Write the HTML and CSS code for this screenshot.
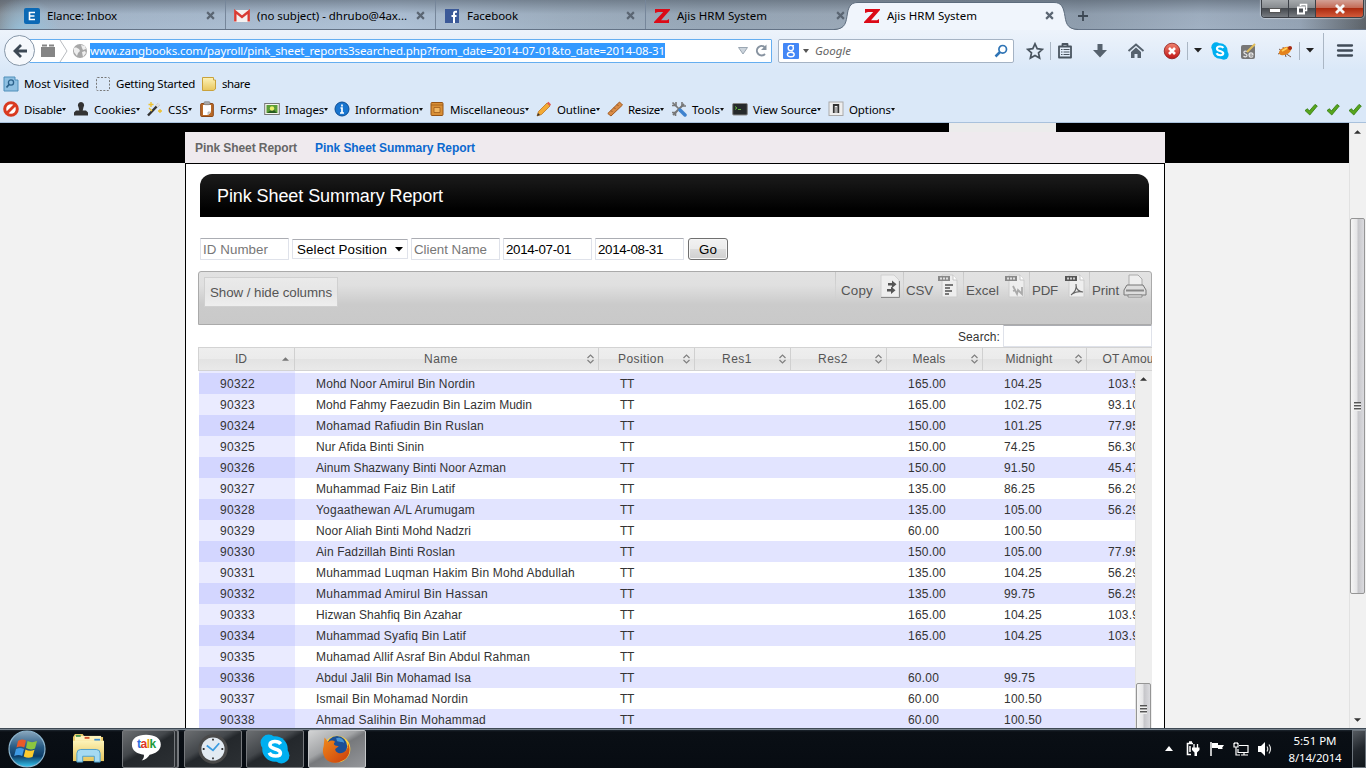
FILE: index.html
```html
<!DOCTYPE html>
<html lang="en">
<head>
<meta charset="utf-8">
<title>Ajis HRM System</title>
<link rel="stylesheet" href="styles.css">
</head>
<body>
<svg class="defs" width="0" height="0">
  <defs>
    <linearGradient id="gRed" x1="0" y1="0" x2="0" y2="1"><stop offset="0" stop-color="#f0836f"/><stop offset="1" stop-color="#c01515"/></linearGradient>
    <linearGradient id="gOrb" x1="0" y1="0" x2="0" y2="1"><stop offset="0" stop-color="#8aa7bd"/><stop offset=".45" stop-color="#265a84"/><stop offset=".7" stop-color="#0d3d68"/><stop offset="1" stop-color="#35c8f2"/></linearGradient>
    <linearGradient id="gFolder" x1="0" y1="0" x2="0" y2="1"><stop offset="0" stop-color="#fdf3b8"/><stop offset="1" stop-color="#e8c65c"/></linearGradient>
    <linearGradient id="gFox" x1="0" y1="0" x2="1" y2="1"><stop offset="0" stop-color="#f08a1c"/><stop offset="1" stop-color="#c93c0a"/></linearGradient>
    <symbol id="x" viewBox="0 0 8 8"><path d="M1 1l6 6M7 1l-6 6" stroke="#5b6673" stroke-width="1.900"/></symbol>
    <symbol id="z" viewBox="0 0 16 16"><path d="M1 1h15v1L7 12.300H13l2-1.300v4H0v-1L9.200 3.900H4L1 5z" fill="#dc0a17"/></symbol>
    <symbol id="check" viewBox="0 0 14 13"><path d="M1 7.500l2.500-1.800L5.300 8 11 1.400 13.300 3 5.800 12z" fill="#58a51c" stroke="#2f7a0b" stroke-width=".8"/></symbol>
    <symbol id="sort" viewBox="0 0 8 10"><path d="M1 4l3-3 3 3M1 6l3 3 3-3" fill="none" stroke="#808080" stroke-width="1.200"/></symbol>
    <symbol id="doc" viewBox="0 0 20 24"><path d="M4 1h11l4 5v17H4z" fill="#eee" stroke="#ccc"/><path d="M15 1v5h4" fill="#fff" stroke="#c4c4c4"/></symbol>
    <symbol id="skype" viewBox="0 0 16 16"><circle cx="4.600" cy="4.600" r="4.300" fill="#00aff0"/><circle cx="11.400" cy="11.400" r="4.300" fill="#00aff0"/><circle cx="8" cy="8" r="6.800" fill="#00aff0"/><path d="M11 5.300C9.800 3.500 5.300 3.500 5.300 5.900c0 2.600 5.600 1.500 5.600 4.200 0 2.200-4.800 2.300-6-.1" fill="none" stroke="#fff" stroke-width="1.900"/></symbol>
  </defs>
</svg>

<header class="chrome">
  <div class="tabs">
    <div class="tab"><svg class="fav" viewBox="0 0 16 16"><rect width="16" height="16" rx="2" fill="#0b69b5"/><path d="M11 4.500H5.500v7H11M5.500 8h5" fill="none" stroke="#fff" stroke-width="1.600"/></svg><span class="tt" data-w="70">Elance: Inbox</span><svg class="tx"><use href="#x"/></svg></div>
    <div class="tab"><svg class="fav" viewBox="0 0 16 16"><rect y="2" width="16" height="12" rx="1" fill="#f4f1f0"/><path d="M1.300 13.500V3.500L8 9l6.700-5.500v10" fill="none" stroke="#d93b33" stroke-width="2.400"/></svg><span class="tt" data-w="150">(no subject) - dhrubo@4ax...</span><svg class="tx"><use href="#x"/></svg></div>
    <div class="tab"><svg class="fav" viewBox="0 0 16 16"><rect x="1" y="1" width="14" height="14" fill="#3b5998"/><path d="M13 3.800h-1.500c-1 0-1.500.6-1.500 1.600V15M7.500 8h5" fill="none" stroke="#fff" stroke-width="2"/></svg><span class="tt" data-w="51">Facebook</span><svg class="tx"><use href="#x"/></svg></div>
    <div class="tab last"><svg class="fav"><use href="#z"/></svg><span class="tt" data-w="90">Ajis HRM System</span><svg class="tx"><use href="#x"/></svg></div>
    <div class="tab active">
      <svg class="shape" viewBox="0 0 244 30"><path d="M0 30C12 29 12 22 13.500 13 15 5 18 2.500 24 2.500H220c7 0 9 4 10.500 11C232 22 232 29 244 30z" fill="#f0f5fc"/><path d="M0 29.500C12 29 12 22 13.500 13 15 5 18 2.500 24 2.500H220c7 0 9 4 10.500 11C232 22 232 29 244 29.500" fill="none" stroke="#5d6c7d"/></svg>
      <svg class="fav"><use href="#z"/></svg><span class="tt" data-w="90">Ajis HRM System</span><svg class="tx"><use href="#x"/></svg>
    </div>
    <svg class="plus" viewBox="0 0 12 12"><path d="M6 1v10M1 6h10" stroke="#3d4854" stroke-width="1.800"/></svg>
    <div class="winbtns">
      <span class="wb min"><svg viewBox="0 0 12 6"><rect x=".5" y=".5" width="11" height="4" fill="#fff" stroke="#555"/></svg></span><span class="wb max"><svg viewBox="0 0 12 12"><path d="M4.500 3V1.500h6v6H9" fill="none" stroke="#fff" stroke-width="1.600"/><path d="M2 4.500h6v6H2z" fill="none" stroke="#fff" stroke-width="2"/></svg></span><span class="wb close"><svg viewBox="0 0 12 12"><path d="M2 2l8 8M10 2l-8 8" stroke="#f7f7f7" stroke-width="2.800"/></svg></span>
    </div>
  </div>

  <div class="nav">
    <div class="back"><svg viewBox="0 0 16 16"><path d="M15 8H3M9 2L3 8l6 6" fill="none" stroke="#3c4854" stroke-width="2.800"/></svg></div>
    <div class="url">
      <svg class="brick" viewBox="0 0 16 14"><path d="M1 3h14v10H1z" fill="#858585"/><path d="M2 1.500h5M9 1.500h5" stroke="#858585" stroke-width="2"/></svg>
      <svg class="chev" viewBox="0 0 10 22"><path d="M1 0l7 11-7 11" fill="none" stroke="#b9bcc0"/></svg>
      <svg class="globe" viewBox="0 0 16 16"><circle cx="8" cy="8" r="7" fill="#a7a7a7"/><path d="M2 5c2-1 3 0 5 1l1 2-2 2-1 3-3-4zM9 2l4 1 1 3-3 1-1-2zM10 9l3-1 1 2-3 4z" fill="#eee"/></svg>
      <span class="sel" data-w="575">www.zangbooks.com/payroll/pink_sheet_reports3searched.php?from_date=2014-07-01&amp;to_date=2014-08-31</span>
      <svg class="drop" viewBox="0 0 10 8"><path d="M.5.500h9L5 7z" fill="#ccd4dc" stroke="#9aa6b2"/></svg>
      <svg class="reload" viewBox="0 0 14 14"><path d="M10.500 3A4.700 4.700 0 1 0 11 10" fill="none" stroke="#8793a0" stroke-width="2"/><path d="M7 6h5.500V.5z" fill="#8793a0"/></svg>
    </div>
    <div class="gsearch">
      <svg class="g8" viewBox="0 0 16 16"><rect width="16" height="16" rx="1" fill="#4387f6"/><circle cx="7.800" cy="5" r="2.600" fill="none" stroke="#fff" stroke-width="1.400"/><ellipse cx="7.800" cy="11.500" rx="3.400" ry="2.300" fill="none" stroke="#fff" stroke-width="1.400"/><path d="M8 2.500h3M8 7.500l2 2" stroke="#fff"/></svg>
      <svg class="gd" viewBox="0 0 6 4"><path d="M0 0h6L3 4z" fill="#555"/></svg>
      <em data-w="36">Google</em>
      <svg class="mag" viewBox="0 0 14 14"><circle cx="8.700" cy="5.300" r="3.800" fill="none" stroke="#2f74b5" stroke-width="1.700"/><path d="M6 8L1.500 12.500" stroke="#2f74b5" stroke-width="2.500"/></svg>
    </div>
    <div class="acts">
      <svg viewBox="0 0 18 18"><path d="M9 1.800l2.200 4.900 5.200.6-3.900 3.500 1.100 5.200L9 13.400 4.400 16l1.100-5.200L1.600 7.300l5.200-.6z" fill="none" stroke="#49545f" stroke-width="1.700"/></svg>
      <i class="sep"></i>
      <svg viewBox="0 0 18 18"><path d="M6.500 4V2h5v2M3 4.500h12v11H3z" fill="none" stroke="#49545f" stroke-width="1.800" stroke-linejoin="round"/><path d="M5 7.500h1.500m1 0h6M5 10h1.500m1 0h6M5 12.500h1.500m1 0h6" stroke="#49545f" stroke-width="1.200"/></svg>
      <svg viewBox="0 0 18 18"><path d="M6.500 2h5v6H16l-7 7.500L2 8h4.500z" fill="#56626e"/></svg>
      <svg viewBox="0 0 18 18"><path d="M1.500 9L9 2.500 16.500 9" fill="none" stroke="#56626e" stroke-width="1.900"/><path d="M4 10l5-4.500L14 10v6h-3.500v-4h-3v4H4z" fill="#56626e"/></svg>
      <svg viewBox="0 0 18 18"><circle cx="9" cy="9" r="7.800" fill="url(#gRed)" stroke="#8b1a18" stroke-width=".8"/><path d="M6 6l6 6M12 6l-6 6" stroke="#fff" stroke-width="2.600"/></svg>
      <i class="sep"></i>
      <svg class="sm" viewBox="0 0 8 5"><path d="M0 0h8L4 4.500z" fill="#222"/></svg>
      <svg viewBox="0 0 16 16"><use href="#skype"/></svg>
      <svg viewBox="0 0 18 18"><rect x="2" y="3" width="14" height="14" rx="2" fill="#777"/><path d="M8 9.500C6 8.500 4.500 9.300 5 10.800s3 1 3 2.700-2.500 1.600-3.500.5M10 13h4c0-2.800-4-2.800-4 0s3 2.500 4 1.300" fill="none" stroke="#e5e5e5" stroke-width="1.200"/><path d="M8 10l8-8" stroke="#e0bd5a" stroke-width="2"/></svg>
      <svg viewBox="0 0 18 18"><path d="M3 7l12 8M7 5l3 10M2 12l14-6" stroke="#553322" stroke-width=".8"/><ellipse cx="9" cy="9" rx="6.500" ry="3.700" transform="rotate(-25 9 9)" fill="#e4831c"/><circle cx="14" cy="6" r="2" fill="#a82c14"/><path d="M6 9l5-3" stroke="#ffd05a" stroke-width="2"/></svg>
      <i class="sep"></i>
      <svg class="sm" viewBox="0 0 8 5"><path d="M0 0h8L4 4.500z" fill="#222"/></svg>
      <i class="sep tall"></i>
      <svg viewBox="0 0 18 18"><path d="M2 3.500h14M2 8.500h14M2 13.500h14" stroke="#414c58" stroke-width="2.300" stroke-linecap="round"/></svg>
    </div>
  </div>

  <div class="bookmarks">
    <svg viewBox="0 0 16 16"><path d="M1 1h11v3h3v11H1z" fill="#8fc0e2" stroke="#4e8fba"/><circle cx="8" cy="6.500" r="2.600" fill="none" stroke="#2c628c" stroke-width="1.300"/><path d="M6 8.500L3.500 11.500" stroke="#2c628c" stroke-width="1.800"/></svg><span data-w="65">Most Visited</span>
    <svg viewBox="0 0 16 16"><rect x="1.500" y="1.500" width="13" height="13" rx="1" fill="none" stroke="#777" stroke-dasharray="2 1.500"/></svg><span data-w="79">Getting Started</span>
    <svg viewBox="0 0 16 16"><path d="M1.500 1.500h11V4h2v9l-2 1.500h-11z" fill="url(#gFolder)" stroke="#c9a23c"/></svg><span data-w="28">share</span>
  </div>

  <div class="dev">
    <div><svg viewBox="0 0 16 16"><circle cx="8" cy="8" r="6.300" fill="#fff" stroke="#d93a20" stroke-width="3"/><path d="M4 12l8-8" stroke="#d93a20" stroke-width="2.800"/></svg><span data-w="38">Disable</span></div>
    <div><svg viewBox="0 0 16 16"><path d="M8 1a3.300 3.300 0 0 1 2.500 5.200L9.700 9.500H13l2 2v3H1v-3l2-2h3.300L5.500 6.200A3.300 3.300 0 0 1 8 1z" fill="#333"/></svg><span data-w="42">Cookies</span></div>
    <div><svg viewBox="0 0 16 16"><path d="M1 14.500L12 3" stroke="#333" stroke-width="2.500"/><path d="M9.500 5.500l3-3" stroke="#ddd" stroke-width="2.500"/><path d="M4 1v5M1.500 3.500h5M13 8v4M11 10h4M2 7l3 3" stroke="#eec02a" stroke-width="1.300"/></svg><span data-w="20">CSS</span></div>
    <div><svg viewBox="0 0 16 16"><rect x="1.700" y="2.500" width="12.600" height="13" rx="1" fill="#b96927" stroke="#8a4717"/><path d="M4 4h8v7l-3 3H4z" fill="#fff"/><path d="M9 14v-3h3" fill="#ddd" stroke="#999" stroke-width=".6"/><rect x="5" y=".7" width="6" height="3" rx="1" fill="#aaa" stroke="#777" stroke-width=".6"/></svg><span data-w="33">Forms</span></div>
    <div><svg viewBox="0 0 16 16"><rect x=".7" y="2.500" width="14.600" height="11" fill="#f4f4ee" stroke="#777"/><rect x="2.500" y="4" width="11" height="8" fill="#5b9d37"/><path d="M3 12l4-3h3l3 3z" fill="#275c21"/><circle cx="8" cy="7.500" r="2.200" fill="#ecf06b"/></svg><span data-w="39">Images</span></div>
    <div><svg viewBox="0 0 16 16"><circle cx="8" cy="8" r="7" fill="#1875cf" stroke="#0c4c94"/><path d="M8 3.500v2M6.500 7H8v5M6 12h4" fill="none" stroke="#fff" stroke-width="1.700"/></svg><span data-w="64">Information</span></div>
    <div><svg viewBox="0 0 16 16"><rect x="2" y="1.500" width="12" height="13" rx="1" fill="#d98f36" stroke="#965416"/><path d="M2 4h12M5 6.500h6v5H5z" fill="#f0b560" stroke="#a05d1b" stroke-width=".8"/></svg><span data-w="75">Miscellaneous</span></div>
    <div><svg viewBox="0 0 16 16"><path d="M1 15l1.500-4.500L11 2l3 3-8.500 8.500z" fill="#f3aa35" stroke="#b66b16" stroke-width=".7"/><path d="M11 2l1.500-1.200L15 3.500 14 5z" fill="#e35b52"/><path d="M1 15l1-3 2 2z" fill="#333"/></svg><span data-w="39">Outline</span></div>
    <div><svg viewBox="0 0 16 16"><path d="M.8 12.500L12.500 1l3 3L4 15z" fill="#d98b45" stroke="#a0591f"/><path d="M4 9.500l1.500 1.500M7 6.500L8.500 8M10 3.500L11.500 5" stroke="#8a4a18" stroke-width=".8"/></svg><span data-w="32">Resize</span></div>
    <div><svg viewBox="0 0 16 16"><path d="M2 14L13 3" stroke="#777" stroke-width="2"/><path d="M1.500 1.500L9 9" stroke="#777" stroke-width="1.700"/><path d="M9 9l5 5" stroke="#3e82ce" stroke-width="3.500" stroke-linecap="round"/><path d="M11 1v4h4M1 11.500h3.500V15M5 1v3.500H1" fill="none" stroke="#777" stroke-width="1.600"/></svg><span data-w="28">Tools</span></div>
    <div><svg viewBox="0 0 16 16"><rect x=".7" y="2.500" width="14.600" height="11.500" rx="1" fill="#25292b" stroke="#888"/><path d="M3 5.500l2 1.500-2 1.500M6 8.500h3" fill="none" stroke="#5fb63c"/></svg><span data-w="64">View Source</span></div>
    <div><svg viewBox="0 0 16 16"><rect x="1" y="1" width="14" height="13.500" fill="#eee" stroke="#aaa"/><path d="M5.800 12V4h4.500v8" fill="none" stroke="#333" stroke-width="1.800"/><path d="M8 6v6" stroke="#aaa" stroke-width="2"/></svg><span data-w="42">Options</span></div>
    <div class="checks"><svg><use href="#check"/></svg><svg><use href="#check"/></svg><svg><use href="#check"/></svg></div>
  </div>
</header>

<div class="view">
  <div class="page">
    <div class="topband"><i></i></div>
    <main class="wrap">
      <nav class="sub"><a class="g" data-w="102">Pink Sheet Report</a><a class="b" data-w="160">Pink Sheet Summary Report</a></nav>
      <section class="sheet">
        <h1><span data-w="226">Pink Sheet Summary Report</span></h1>
        <div class="form">
          <div class="in ph"><span data-w="65">ID Number</span></div>
          <div class="in select"><span data-w="90">Select Position</span><svg viewBox="0 0 8 5"><path d="M0 0h8L4 4.500z"/></svg></div>
          <div class="in ph"><span data-w="73">Client Name</span></div>
          <div class="in"><span data-w="65">2014-07-01</span></div>
          <div class="in"><span data-w="65">2014-08-31</span></div>
          <div class="go"><span data-w="18">Go</span></div>
        </div>
        <div class="tools">
          <div class="shc"><span data-w="122">Show / hide columns</span></div>
          <div class="exports">
            <div class="ex e1"><span data-w="32">Copy</span><svg viewBox="0 0 20 24"><path d="M1 1h13l5 5v17H1z" fill="#eee" stroke="#d0d0d0"/><path d="M1 23.500h18.500V7" fill="none" stroke="#888"/><path d="M8 9h4V6.500l4.500 3.700-4.500 3.700V11.500H8zM7 15h4v-2.500l4.500 3.700-4.500 3.700V17.500H7z" fill="#555"/></svg></div>
            <div class="ex e2"><span data-w="27">CSV</span><svg viewBox="0 0 20 24"><use href="#doc"/><rect y="2" width="12" height="5" fill="#888"/><path d="M2 4.500h2m1 0h2m1 0h2" stroke="#ddd" stroke-width="2"/><path d="M7 11h8M7 14h5M7 17h7M7 20h4" stroke="#777" stroke-width="1.800"/></svg></div>
            <div class="ex e3"><span data-w="33">Excel</span><svg viewBox="0 0 20 24"><use href="#doc"/><rect y="2" width="12" height="5" fill="#888"/><path d="M2 4.500h2m1 0h2m1 0h2" stroke="#ddd" stroke-width="2"/><path d="M8 12l4 8 1-4 4 4v-7M8 17l3-1" fill="none" stroke="#aaa" stroke-width="1.800"/></svg></div>
            <div class="ex e4"><span data-w="26">PDF</span><svg viewBox="0 0 20 24"><use href="#doc"/><rect y="2" width="12" height="5" fill="#555"/><path d="M2 4.500h2m1 0h2m1 0h2" stroke="#ccc" stroke-width="2"/><path d="M11 10c1 5-2 9-5 11M11 11c0 4 3 7 7 7-4-1-8 0-11 2" fill="none" stroke="#666" stroke-width="1.200"/></svg></div>
            <div class="ex e5"><span data-w="27">Print</span><svg viewBox="0 0 24 24"><path d="M6 12V1h9l4 4v7" fill="#eee" stroke="#aaa"/><path d="M4 11h16l3 5v5H1v-5z" fill="#ddd" stroke="#777"/><path d="M3 15.500h18v2H3z" fill="#888"/><path d="M5 21h14v2H5z" fill="#fff" stroke="#888"/></svg></div>
          </div>
        </div>
        <div class="search"><span data-w="42">Search:</span><div class="in"></div></div>
        <div class="thead" id="thead"></div>
        <div class="tbody">
          <div class="rows" id="rows"></div>
          <div class="isb"><svg viewBox="0 0 8 4"><path d="M0 4h8L4 0z"/></svg><div class="thumb"><i></i></div></div>
        </div>
      </section>
    </main>
  </div>
  <div class="vsb"><svg viewBox="0 0 8 4"><path d="M0 4h8L4 0z"/></svg><div class="thumb"><i></i></div><svg class="dn" viewBox="0 0 8 4"><path d="M0 0h8L4 4z"/></svg></div>
</div>

<footer class="taskbar">
  <svg class="orb" viewBox="0 0 38 38"><circle cx="19" cy="19" r="18" fill="url(#gOrb)" stroke="#8db6cf" stroke-width="1.200"/><path d="M10 11c3-2 5-2 8-.5l-1.700 7C13.500 16 11 16 8.500 17.500z" fill="#ea5a28"/><path d="M19.500 11c3 1.500 6 1.500 9.500 0l-2 7.500c-3 1.300-6 1.200-9-.5z" fill="#8cc63f"/><path d="M8 19c3-1.500 5-1.300 8 0l-1.800 7c-2.500-1.500-5-1.500-8 0z" fill="#3f9be5"/><path d="M17.500 19.500c3 1.500 6 1.500 9 .3l-2 7.200c-3 1.200-6 1-8.800-.6z" fill="#fccb2d"/></svg>
  <svg class="folder" viewBox="0 0 34 32"><path d="M1 4l2-3h8l2 3h19v25H1z" fill="#eacb6b"/><path d="M3 3h27v5H3z" fill="#fff4bc"/><path d="M4 3h5" stroke="#4f9a54" stroke-width="2"/><path d="M13 5h5" stroke="#d0552f" stroke-width="2"/><path d="M23 7h6" stroke="#3f8fd0" stroke-width="2"/><path d="M1 8h32v21H1z" fill="url(#gFolder)"/><path d="M5 30V21q0-4 4-4h16q4 0 4 4v9h-6v-6H11v6z" fill="#a5daf2" stroke="#4d9fc9"/></svg>
  <div class="tb stack"><svg viewBox="0 0 36 36"><path d="M17 2c10 0 16.500 4 16.500 11S27 23.500 21 24.500c-2 3.500-5 5.500-9 6.500 2-2 3-4 2.500-6.500C6.500 23.500 1 20 1 13S7 2 17 2z" fill="#fff"/></svg><b class="talk"><i>t</i><i>a</i><i>l</i><i>k</i></b></div>
  <div class="tb"><svg viewBox="0 0 36 36"><circle cx="18" cy="18" r="16.500" fill="#4a4a4a"/><circle cx="18" cy="18" r="13" fill="#e2eaf2"/><path d="M18 6.500v2M18 27.500v2M6.500 18h2M27.500 18h2" stroke="#333" stroke-width="2"/><path d="M11 14l7 5.500 7-8" fill="none" stroke="#3a9be0" stroke-width="2"/></svg></div>
  <div class="tb"><svg class="sk"><use href="#skype"/></svg></div>
  <div class="tb on"><svg viewBox="0 0 36 36"><circle cx="18" cy="18" r="15" fill="#ffd23c"/><circle cx="18" cy="15" r="11.500" fill="#1c4f96"/><path d="M17 6c4-2 9 1 9 5-3-2-5 0-8-2z" fill="#4694d3"/><path d="M4 5l4 5c3-2 6-2 8 0-2 1-2 3 0 4l4 1-4 3c0 4 5 6 9 4 4-2 6-6 5-11 4 6 3 18-8 21C9 38-1 26 3 15z" fill="url(#gFox)"/></svg></div>
  <div class="tray">
    <svg class="up" viewBox="0 0 8 5"><path d="M0 5h8L4 0z" fill="#fff"/></svg>
    <svg viewBox="0 0 16 16"><path d="M6 13.500H2.500v-11H8M4 1h3" fill="none" stroke="#fff" stroke-width="1.600"/><path d="M5 5v6" stroke="#fff" stroke-width="1.500"/><path d="M9 3v4M12.500 3v4" stroke="#fff" stroke-width="1.300"/><path d="M7 6.500h7.500V9L12 11.500V15H9.500v-3.500L7 9z" fill="#fff"/></svg>
    <svg viewBox="0 0 16 16"><path d="M2 1v14" stroke="#fff" stroke-width="1.500"/><path d="M3 2h6v2h6l-2 3 1 1H9V7H3z" fill="#fff"/></svg>
    <svg viewBox="0 0 16 16"><path d="M6 4.500h9v7H5V8M8 14h7M11 12v2M1 2v4h4V2M3 6v8h4M2 1v2M4 1v2" fill="none" stroke="#fff" stroke-width="1.200"/></svg>
    <svg viewBox="0 0 16 16"><path d="M1 5h3l4-4v14l-4-4H1z" fill="#fff"/><path d="M10 5.500q1.500 2.500 0 5M12 3.500q3 4.500 0 9" fill="none" stroke="#ddd" stroke-width="1.200"/></svg>
  </div>
  <div class="clock"><span data-w="43">5:51 PM</span><span data-w="53">8/14/2014</span></div>
  <div class="desk"></div>
</footer>
<script src="app.js"></script>
</body>
</html>
```

FILE: styles.css
```css
* { box-sizing: border-box; }
html, body { margin: 0; height: 100%; overflow: hidden; }
body { width: 1366px; height: 768px; display: flex; flex-direction: column; font: 12px "Liberation Sans", Arial, sans-serif; color: #333; }
svg { display: block; flex: none; }
.defs { position: absolute; }
[data-w] { display: inline-block; white-space: nowrap; flex: none; }

/* browser chrome */
.chrome { height: 123px; flex: none; display: flex; flex-direction: column; font-family: "Noto Sans", "Open Sans", sans-serif; font-size: 11.500px; color: #000; background: linear-gradient(#edf3fb 30px, #dae8f8 70px, #dae8f8); border-bottom: 1px solid #a9c1dc; }
.tabs { height: 30px; flex: none; display: flex; position: relative; padding-left: 16px; background: radial-gradient(ellipse 36px 34px at 24px 32px, #97c2dc, transparent), linear-gradient(rgba(70,80,92,.5), rgba(120,130,145,.1) 14px, transparent), linear-gradient(90deg, #83878d, #a5b7ca 40px, #afc2d7 400px, #a0b1c2 560px, #98a8b8 700px, #9ba9b8 860px, #8f9eae 1080px, #a1b1c3 1200px, #95a4b5 1300px, #5c6268); border-bottom: 1px solid #647386; }
.tab { width: 210px; height: 29px; padding: 2px 10px 0 8px; display: flex; align-items: center; gap: 7px; border-right: 1px solid #76869a; }
.tab.last { border-right: 0; width: 200px; padding-right: 1px; }
.tt { white-space: pre; }
.fav { width: 16px; height: 16px; position: relative; }
.tx { width: 9px; height: 9px; margin-left: auto; position: relative; }
.tab.active { width: 244px; height: 30px; padding: 1px 24px 0 30px; margin-left: -12px; border: 0; position: relative; margin-right: -8px; }
.tab.active .tt { position: relative; }
.shape { position: absolute; left: 0; top: 0; width: 244px; height: 30px; }
.plus { width: 12px; height: 12px; margin: 10px 0 0 7px; }
.winbtns { position: absolute; right: 2px; top: 0; display: flex; height: 18px; border: 1px solid #3c4046; border-top: 0; border-radius: 0 0 4px 4px; overflow: hidden; box-shadow: 0 0 1px 1px rgba(255,255,255,.4); }
.wb { display: flex; align-items: center; justify-content: center; width: 27px; background: linear-gradient(#a6aaad, #85898d 48%, #45494e 50%, #777b80); border-right: 1px solid #3c4046; }
.wb svg { width: 12px; }
.wb.min svg { margin-top: 4px; }
.wb.close { width: 47px; border: 0; background: linear-gradient(#d3a095, #c46c58 45%, #ac2b10 50%, #d35a3a); }
.nav { height: 41px; display: flex; flex: none; align-items: center; }
.back { width: 31px; height: 31px; margin-left: 4px; border-radius: 50%; border: 1px solid #8797a8; background: #f5f8fc; display: flex; align-items: center; justify-content: center; position: relative; z-index: 1; }
.back svg { width: 16px; }
.url { width: 743px; height: 24px; margin-left: -6px; display: flex; align-items: center; background: #fff; border: 1px solid #65aef0; border-radius: 1px; padding-left: 10px; }
.brick { width: 16px; height: 14px; }
.chev { width: 10px; height: 22px; margin-left: 3px; }
.globe { width: 16px; height: 16px; margin: 0 2px 0 3px; }
.sel { background: #3399ff; color: #fff; line-height: 15px; height: 15px; }
.drop { width: 10px; height: 8px; margin-left: 73px; }
.reload { width: 14px; height: 14px; margin-left: 6px; }
.gsearch { width: 236px; height: 24px; margin-left: 6px; display: flex; align-items: center; background: #fff; border: 1px solid #a5b3c4; border-radius: 2px; padding: 0 5px 0 4px; }
.g8 { width: 16px; height: 16px; }
.gd { width: 6px; height: 4px; margin: 0 6px 0 4px; }
.gsearch em { color: #666; }
.mag { width: 14px; height: 14px; margin-left: auto; }
.acts { display: grid; flex: 1; align-items: center; height: 36px; padding-left: 12px; grid-template-columns: 24px 6px 35px 36px 36px 24px 7px 17px 28px 37px 23px 7px 17px 13px 1fr; grid-auto-flow: column; }
.acts svg { width: 18px; height: 18px; }
.acts svg.sm { width: 8px; height: 5px; }
.sep { width: 1px; height: 18px; background: #aab6c4; }
.sep.tall { height: 36px; }
.bookmarks { height: 26px; display: flex; align-items: center; padding-left: 3px; }
.bookmarks svg { width: 16px; height: 16px; margin-right: 5px; }
.bookmarks span { margin-right: 6px; }
.dev { height: 26px; display: grid; grid-template-columns: 70px 74px 52px 65px 70px 95px 107px 71px 64px 61px 96px 70px 1fr; padding-left: 3px; }
.dev div { display: flex; align-items: center; }
.dev svg { width: 16px; height: 16px; margin-right: 5px; }
.dev span { position: relative; }
.dev span::after { content: ""; position: absolute; left: 100%; top: 6px; border: 2.500px solid transparent; border-top: 3px solid #111; border-bottom: 0; }
.dev .checks { justify-content: flex-end; }
.dev .checks svg { width: 14px; height: 13px; margin: 0 4px; }

/* page */
.view { height: 605px; flex: none; display: flex; }
.page { width: 1349px; height: 605px; overflow: hidden; background: linear-gradient(#000 40px, #f2f2f2 40px); }
.topband { height: 9px; }
.topband i { display: block; margin-left: 949px; width: 107px; height: 9px; background: #ececec; }
.wrap { width: 980px; margin-left: 185px; }
.sub { height: 31px; background: #efeaee; padding: 0 10px; display: flex; align-items: center; gap: 18px; font-weight: bold; }
.sub .g { color: #666; }
.sub .b { color: #0b69cf; }
.sheet { height: 566px; background: #fff; border: 1px solid #000; padding: 10px 12px 0; }
h1 { margin: 0 3px 0 2px; height: 43px; border-radius: 12px 12px 0 0; background: linear-gradient(#1c1c1c, #000 85%); color: #fff; font-weight: normal; font-size: 18px; padding: 2px 0 0 17px; display: flex; align-items: center; }
.form { display: flex; align-items: center; margin: 21px 0 0 2px; height: 22px; font-size: 13.333px; color: #000; gap: 3px; }
.in { width: 89px; height: 22px; background: #fff; border: 1px solid #dfe2ea; border-top-color: #abadb3; border-radius: 1px; padding-left: 2px; display: flex; align-items: center; }
.ph { color: #777; }
.select { width: 116px; height: 20px; padding: 0 4px; justify-content: space-between; }
.select svg { width: 8px; height: 5px; }
.go { width: 40px; height: 22px; margin-left: 1px; border: 1px solid #707070; border-radius: 3px; background: linear-gradient(#f2f2f2, #ebebeb 50%, #ddd 50%, #cfcfcf); box-shadow: inset 0 0 0 1px #f6f6f6; display: flex; align-items: center; justify-content: center; }
.tools { margin-top: 11px; height: 54px; border: 1px solid #aaa; border-radius: 3px 3px 0 0; background: linear-gradient(#e2e2e2, #e0e0e0 25%, #cbcbcb 62%, #c9c9c9); display: flex; justify-content: space-between; font-size: 13.333px; color: #555; }
.shc { height: 30px; width: 134px; margin: 5px; border: 1px solid #d0d0d0; background: linear-gradient(#eaeaea, #e6e6e6 50%, #eee); display: flex; align-items: center; justify-content: center; padding-top: 1px; }
.exports { display: flex; height: 28px; }
.ex { border-left: 1px solid; border-image: linear-gradient(#c6c6c6, transparent) 1; padding: 7px 0 0 5px; display: flex; align-items: center; gap: 7px; height: 29px; }
.ex svg { width: 20px; height: 24px; margin-top: -9px; }
.e1 { width: 68px; } .e2 { width: 60px; padding-left: 2px; gap: 5px; } .e3 { width: 66px; padding-left: 2px; gap: 6px; } .e4 { width: 60px; padding-left: 2px; } .e5 { width: 62px; padding-left: 2px; gap: 4px; }
.ex.e5 svg { width: 24px; }
.search { height: 22px; display: flex; align-items: center; justify-content: flex-end; gap: 3px; }
.search span { padding-top: 1px; }
.search .in { width: 149px; height: 22px; }
.thead { height: 24px; display: flex; overflow: hidden; border: 1px solid #d3d3d3; border-right: 0; background: linear-gradient(#eee, #ebebeb 50%, #e3e3e3 52%, #e9e9e9); color: #555; }
.th { flex: none; display: flex; align-items: center; border-right: 1px solid #d0d0d0; padding-right: 3px; }
.th .lab { flex: 1; display: flex; justify-content: center; padding-left: 1px; }
.th svg { width: 9px; height: 10px; }
.th svg.asc { width: 7px; height: 4px; margin-right: 2px; fill: #777; }
.tbody { display: flex; height: 357px; overflow: hidden; padding-left: 1px; }
.rows { width: 936px; overflow: hidden; background: linear-gradient(90deg, #eaebff 96px, transparent 96px); padding-top: 2px; flex: none; }
.row { display: grid; height: 21px; width: 1000px; align-items: center; grid-template-columns: 96px 304px 96px 96px 96px 96px 104px 112px; }
.row > div { height: 21px; line-height: 21px; padding: 1px 0 0 21px; }
.row:nth-child(odd) { background: #e2e4ff; }
.row > div:first-child { background: #eaebff; }
.row:nth-child(odd) > div:first-child { background: #d3d6ff; }
.isb { width: 17px; background: #eee; border-left: 1px solid #e4e4e4; display: flex; flex-direction: column; align-items: flex-start; padding-top: 6px; }
.isb > svg { margin-left: 4px; }
.isb > svg, .vsb > svg { width: 7px; height: 4px; fill: #333; }
.isb .thumb { margin-top: 302px; width: 15px; height: 80px; flex: none; padding-top: 21px; }
.thumb { border: 1px solid #959595; border-radius: 2px; background: linear-gradient(90deg, #f5f5f5, #e5e5e7 45%, #c6c6ca 55%, #dadade); display: flex; justify-content: center; }
.thumb i { width: 7px; height: 9px; background: repeating-linear-gradient(#555 0 1px, #aaa 1px 2px, #f0f0f0 2px 3px); }
.vsb { width: 17px; background: #f1f1f1; border-left: 1px solid #e2e2e2; display: flex; flex-direction: column; align-items: center; padding: 7px 1px 6px 0; }
.vsb .thumb { margin-top: 84px; width: 15px; height: 376px; align-items: center; }
.vsb .dn { margin-top: auto; }

/* taskbar */
.taskbar { height: 40px; flex: none; display: flex; align-items: center; border-top: 1px solid #3f4a55; background: linear-gradient(#26303a, #0a0f15 3px, #070c12); box-shadow: inset 0 1px #77828c; color: #fff; font-family: "Noto Sans", "Open Sans", sans-serif; font-size: 11.500px; }
.orb { width: 38px; height: 38px; margin-left: 8px; }
.folder { width: 33px; height: 31px; margin: 0 17px 0 26px; }
.tb { width: 58px; height: 38px; margin-right: 4px; border: 1px solid #76797d; border-radius: 2px; background: linear-gradient(150deg, #6b6e71, #43474b 40%, #24282c 50%, #2c3034); display: flex; align-items: center; justify-content: center; position: relative; }
.tb svg { width: 32px; height: 32px; }
.tb svg.sk { width: 30px; height: 30px; }
.stack { width: 53px; margin-right: 9px; padding-right: 3px; box-shadow: 3px 0 0 -1px #2b2f33, 4px 0 0 0 #75787c; }
.on { background: linear-gradient(150deg, #d2d3d4, #a2a4a6 40%, #77797c 50%, #94969a); border-color: #c4c6c8; }
.talk { position: absolute; left: 14px; top: 6px; font: bold 12px "Liberation Sans", Arial, sans-serif; letter-spacing: -.5px; }
.talk i { font-style: normal; color: #2a6de0; }
.talk i:nth-child(2) { color: #df3525; }
.talk i:nth-child(3) { color: #e8a40a; }
.talk i:nth-child(4) { color: #1b9a3a; }
.tray { margin-left: auto; display: flex; align-items: center; gap: 8px; }
.tray svg { width: 16px; height: 16px; }
.tray svg.up { width: 8px; height: 5px; margin-right: 4px; }
.clock { width: 70px; margin: 0 2px 0 7px; display: flex; flex-direction: column; align-items: center; line-height: 17px; }
.desk { width: 14px; height: 38px; border: 1px solid #6c747c; background: linear-gradient(150deg, #555a60, #22272d 50%, #11161b); }
```

FILE: app.js
```js
const columns = [['ID', 96, 12], ['Name', 304, 34], ['Position', 96, 46], ['Res1', 96, 30], ['Res2', 96, 30], ['Meals', 96, 33], ['Midnight', 104, 47], ['OT Amount', 104, 61]];
const records = [
  ['90322', 'Mohd Noor Amirul Bin Nordin', 159, '165.00', '104.25', '103.95'],
  ['90323', 'Mohd Fahmy Faezudin Bin Lazim Mudin', 216, '165.00', '102.75', '93.10'],
  ['90324', 'Mohamad Rafiudin Bin Ruslan', 168, '150.00', '101.25', '77.95'],
  ['90325', 'Nur Afida Binti Sinin', 108, '150.00', '74.25', '56.30'],
  ['90326', 'Ainum Shazwany Binti Noor Azman', 190, '150.00', '91.50', '45.47'],
  ['90327', 'Muhammad Faiz Bin Latif', 139, '135.00', '86.25', '56.29'],
  ['90328', 'Yogaathewan A/L Arumugam', 159, '135.00', '105.00', '56.29'],
  ['90329', 'Noor Aliah Binti Mohd Nadzri', 155, '60.00', '100.50', ''],
  ['90330', 'Ain Fadzillah Binti Roslan', 139, '150.00', '105.00', '77.95'],
  ['90331', 'Muhammad Luqman Hakim Bin Mohd Abdullah', 259, '135.00', '104.25', '56.29'],
  ['90332', 'Muhammad Amirul Bin Hassan', 172, '135.00', '99.75', '56.29'],
  ['90333', 'Hizwan Shahfiq Bin Azahar', 146, '165.00', '104.25', '103.95'],
  ['90334', 'Muhammad Syafiq Bin Latif', 150, '165.00', '104.25', '103.95'],
  ['90335', 'Muhamad Allif Asraf Bin Abdul Rahman', 214, '', '', ''],
  ['90336', 'Abdul Jalil Bin Mohamad Isa', 155, '60.00', '99.75', ''],
  ['90337', 'Ismail Bin Mohamad Nordin', 152, '60.00', '100.50', ''],
  ['90338', 'Ahmad Salihin Bin Mohammad', 170, '60.00', '100.50', '']
];
const label = (text, width) => `<span data-w="${width}">${text}</span>`;
const amount = t => t ? label(t, t.length === 6 ? 38 : 31) : '';

document.getElementById('thead').innerHTML = columns.map(([t, w, lw], i) =>
  `<div class="th" style="width:${w}px"><div class="lab">${label(t, lw)}</div>` +
  (i ? '<svg><use href="#sort"/></svg>' : '<svg class="asc" viewBox="0 0 8 4"><path d="M0 4h8L4 0z"/></svg>') + '</div>').join('');

document.getElementById('rows').innerHTML = records.map(([id, name, w, meals, mid, ot]) =>
  '<div class="row">' + [label(id, 35), label(name, w), label('TT', 14), '', '', amount(meals), amount(mid), amount(ot)]
    .map(c => `<div>${c}</div>`).join('') + '</div>').join('');

document.querySelectorAll('[data-w]').forEach(el => {
  const target = +el.dataset.w;
  const natural = el.getBoundingClientRect().width;
  el.style.letterSpacing = ((target - natural) / el.textContent.length).toFixed(3) + 'px';
});
```
